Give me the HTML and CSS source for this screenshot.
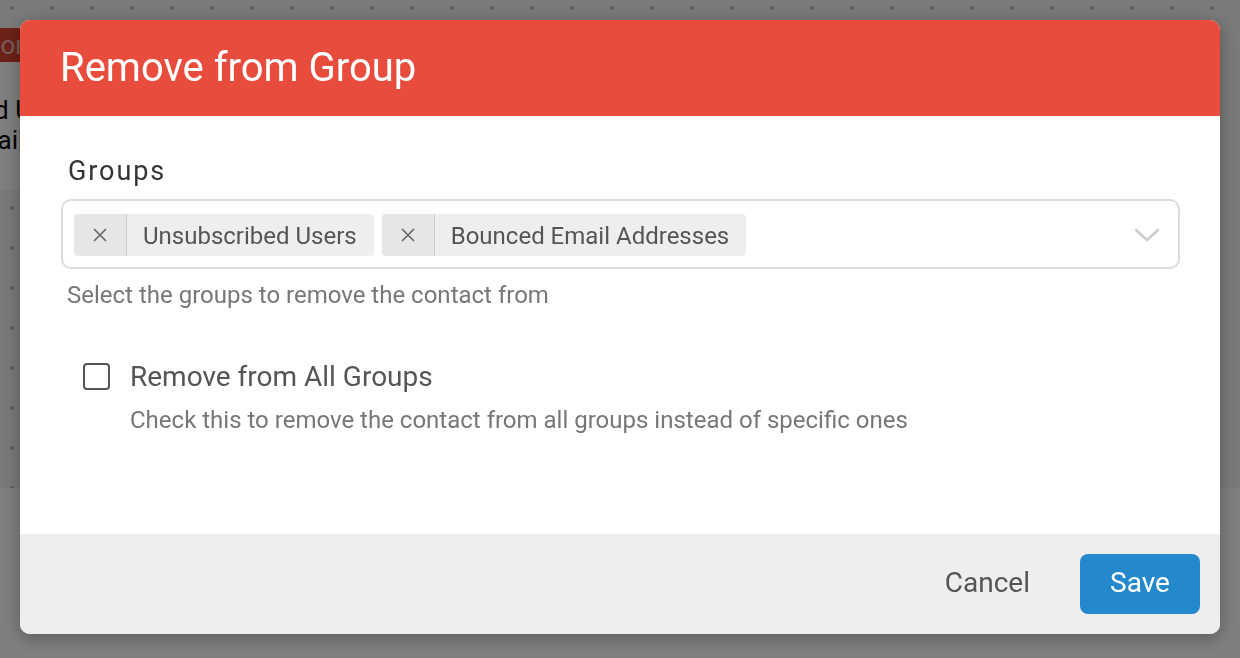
FILE: index.html
```html
<!DOCTYPE html>
<html>
<head>
<meta charset="utf-8">
<link rel="stylesheet" href="styles.css">
</head>
<body>
<div class="page">
  <div class="bg-card">
    <div class="bg-btn">Action</div>
    <div class="bg-line bg-line-1">Bounced Users</div>
    <div class="bg-line bg-line-2">Email</div>
  </div>
</div>
<div class="overlay">
  <div class="dialog">
    <div class="dialog-header">
      <h1 class="dialog-title">Remove from Group</h1>
    </div>
    <div class="dialog-body">
      <div class="field-label">Groups</div>
      <div class="select">
        <div class="tags">
          <div class="tag"><span class="tag-x"><svg width="16" height="16" viewBox="0 0 16 16"><path d="M2 2 L14 14 M14 2 L2 14" stroke="#666" stroke-width="1.6" fill="none"/></svg></span><span class="tag-text">Unsubscribed Users</span></div>
          <div class="tag"><span class="tag-x"><svg width="16" height="16" viewBox="0 0 16 16"><path d="M2 2 L14 14 M14 2 L2 14" stroke="#666" stroke-width="1.6" fill="none"/></svg></span><span class="tag-text">Bounced Email Addresses</span></div>
        </div>
        <svg class="chevron" width="26" height="16" viewBox="0 0 26 16"><path d="M2 3 L13 13 L24 3" fill="none" stroke="#cccccc" stroke-width="2.5" stroke-linecap="round" stroke-linejoin="round"/></svg>
      </div>
      <div class="help">Select the groups to remove the contact from</div>
      <div class="check-row">
        <span class="checkbox"></span>
        <div class="check-texts">
          <div class="check-label">Remove from All Groups</div>
          <div class="check-desc">Check this to remove the contact from all groups instead of specific ones</div>
        </div>
      </div>
    </div>
    <div class="dialog-footer">
      <button class="btn-cancel">Cancel</button>
      <button class="btn-save">Save</button>
    </div>
  </div>
</div>
</body>
</html>
```
FILE: styles.css
```css
html, body {
  margin: 0;
  padding: 0;
  background: #ffffff;
  font-family: Roboto, "Noto Sans", sans-serif;
}
.page {
  height: 488px;
  background-color: #f4f4f4;
  background-image: radial-gradient(circle, #a9bdd6 1.6px, transparent 2px);
  background-size: 40px 40px;
  background-position: -8px -12px;
  padding-top: 28px;
  box-sizing: border-box;
  overflow: hidden;
}
.bg-card {
  width: 300px;
  margin-left: -240px;
  height: 162px;
  background: #ffffff;
  white-space: nowrap;
}
.bg-btn {
  margin-left: 170px;
  width: 120px;
  height: 34px;
  box-sizing: border-box;
  padding-left: 25px;
  background: #d9432f;
  color: #f2b8b0;
  font-size: 26px;
  line-height: 34px;
}
.bg-line {
  font-size: 26px;
  color: #000;
  line-height: 30px;
}
.bg-line-1 {
  margin-top: 33px;
  margin-left: 147px;
}
.bg-line-2 {
  margin-left: 200px;
}
.overlay {
  position: fixed;
  inset: 0;
  background: rgba(0, 0, 0, 0.5);
  display: flex;
  justify-content: center;
  padding-top: 20px;
  box-sizing: border-box;
}
.dialog {
  width: 1200px;
  height: 614px;
  background: #fff;
  border-radius: 10px;
  overflow: hidden;
  box-shadow: 0 4px 18px rgba(0, 0, 0, 0.3);
  display: flex;
  flex-direction: column;
}
.dialog-header {
  height: 96px;
  background: #e74c3c;
  display: flex;
  align-items: center;
  padding: 0 40px;
  flex-shrink: 0;
}
.dialog-title {
  margin: 0;
  color: #fff;
  font-weight: 400;
  font-size: 40px;
  line-height: 1;
}
.dialog-body {
  flex: 1;
  padding: 39px 40px 0 41px;
}
.field-label {
  font-size: 27px;
  color: #333;
  letter-spacing: 1.9px;
  padding-left: 7px;
  line-height: 32px;
  margin-bottom: 12px;
}
.select {
  height: 70px;
  box-sizing: border-box;
  border: 2px solid #dddddd;
  border-radius: 10px;
  display: flex;
  align-items: center;
  justify-content: space-between;
  padding: 1px 18px 0 11px;
}
.tags {
  display: flex;
  gap: 8px;
}
.tag {
  display: flex;
  height: 42px;
  background: #eeeeee;
  border-radius: 4px;
  overflow: hidden;
  color: #555;
  font-size: 24px;
}
.tag-x {
  width: 52px;
  background: #e6e6e6;
  border-right: 1px solid #cccccc;
  display: flex;
  align-items: center;
  justify-content: center;
}
.tag-x svg {
  display: block;
}
.tag-text {
  display: flex;
  align-items: center;
  padding: 2px 17px 0 16px;
}
.chevron {
  display: block;
}
.help {
  font-size: 24px;
  color: #777;
  padding-left: 6px;
  margin-top: 11px;
  line-height: 30px;
}
.check-row {
  display: flex;
  align-items: flex-start;
  margin-top: 50px;
  padding-left: 22px;
  gap: 20px;
}
.checkbox {
  width: 27px;
  height: 27px;
  box-sizing: border-box;
  border: 2px solid #555;
  border-radius: 4px;
  margin-top: 3px;
  flex-shrink: 0;
}
.check-label {
  font-size: 28px;
  color: #555;
  line-height: 34px;
}
.check-desc {
  font-size: 24px;
  color: #777;
  line-height: 30px;
  margin-top: 11px;
}
.dialog-footer {
  height: 100px;
  background: #eeeeee;
  flex-shrink: 0;
  display: flex;
  justify-content: flex-end;
  align-items: center;
  padding: 0 20px;
  gap: 30px;
}
.btn-cancel {
  background: none;
  border: none;
  font-family: inherit;
  font-size: 28px;
  color: #555;
  padding: 0 20px 4px;
  height: 60px;
}
.btn-save {
  width: 120px;
  height: 60px;
  background: #2488cc;
  color: #fff;
  border: none;
  border-radius: 8px;
  font-family: inherit;
  font-size: 28px;
  padding: 0 0 4px;
}
```
